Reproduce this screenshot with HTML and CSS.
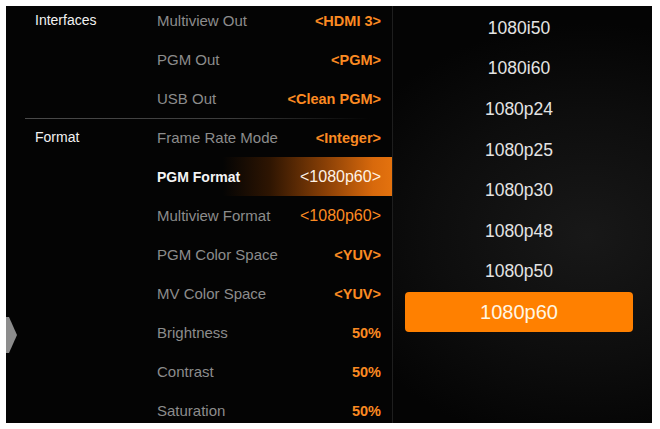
FILE: index.html
```html
<!DOCTYPE html>
<html>
<head>
<meta charset="utf-8">
<link rel="stylesheet" href="styles.css">
</head>
<body>
<div class="frame">
  <div class="screen">
    <div class="menu">
      <div class="group">
        <div class="cat">Interfaces</div>
        <div class="items">
          <div class="row"><span class="label">Multiview Out</span><span class="value">&lt;HDMI 3&gt;</span></div>
          <div class="row"><span class="label">PGM Out</span><span class="value">&lt;PGM&gt;</span></div>
          <div class="row"><span class="label">USB Out</span><span class="value">&lt;Clean PGM&gt;</span></div>
        </div>
      </div>
      <div class="sep"></div>
      <div class="group">
        <div class="cat">Format</div>
        <div class="items">
          <div class="row"><span class="label">Frame Rate Mode</span><span class="value">&lt;Integer&gt;</span></div>
          <div class="row active"><span class="label">PGM Format</span><span class="value">&lt;1080p60&gt;</span></div>
          <div class="row"><span class="label">Multiview Format</span><span class="value thin">&lt;1080p60&gt;</span></div>
          <div class="row"><span class="label">PGM Color Space</span><span class="value">&lt;YUV&gt;</span></div>
          <div class="row"><span class="label">MV Color Space</span><span class="value">&lt;YUV&gt;</span></div>
          <div class="row"><span class="label">Brightness</span><span class="value">50%</span></div>
          <div class="row"><span class="label">Contrast</span><span class="value">50%</span></div>
          <div class="row"><span class="label">Saturation</span><span class="value">50%</span></div>
        </div>
      </div>
    </div>
    <div class="options">
      <div class="opt">1080i50</div>
      <div class="opt">1080i60</div>
      <div class="opt">1080p24</div>
      <div class="opt">1080p25</div>
      <div class="opt">1080p30</div>
      <div class="opt">1080p48</div>
      <div class="opt">1080p50</div>
      <div class="opt selected">1080p60</div>
    </div>
    <svg class="back-arrow" width="12" height="36" viewBox="0 0 12 36"><polygon points="0,0 3,0 11,18 3,36 0,36" fill="#8c8c8c"/></svg>
  </div>
</div>
</body>
</html>
```
FILE: styles.css
```css
html, body {
  margin: 0;
  padding: 0;
  background: #ffffff;
}
body {
  font-family: "Liberation Sans", Arial, sans-serif;
}
.frame {
  padding: 6px 8px 6px 6px;
  width: 660px;
  height: 429px;
  box-sizing: border-box;
}
.screen {
  position: relative;
  display: flex;
  width: 646px;
  height: 417px;
  background: #040404;
  overflow: hidden;
}
.menu {
  width: 386px;
  margin-top: -5px;
  flex: none;
}
.group {
  display: flex;
}
.cat {
  width: 122px;
  padding-left: 29px;
  flex: none;
  height: 39px;
  line-height: 39px;
  color: #f2f2f2;
  font-size: 14px;
}
.items {
  flex: 1;
}
.row {
  height: 39px;
  display: flex;
  align-items: center;
  justify-content: space-between;
  padding-right: 11px;
}
.label {
  color: #8c8c8c;
  font-size: 15px;
}
.value {
  color: #fb8a22;
  font-size: 14.5px;
  font-weight: bold;
}
.value.thin {
  font-weight: normal;
  font-size: 16px;
}
.row.active {
  background: linear-gradient(90deg, rgba(0,0,0,0) 0%, rgba(0,0,0,0) 28%, #2e1502 48%, #8a4006 72%, #d8690c 92%, #e4720e 100%);
}
.row.active .label {
  color: #f4f4f4;
  font-weight: bold;
  font-size: 14px;
}
.row.active .value {
  color: #fff3e6;
  font-weight: normal;
  font-size: 16px;
}
.sep {
  height: 1px;
  margin: 0 22px -1px 19px;
  background: linear-gradient(90deg, #4a4a4a 0%, #3c3c3c 60%, rgba(60,60,60,0) 100%);
}
.options {
  flex: 1;
  border-left: 1px solid #1e1e1e;
  padding: 2px 19px 0 12px;
  background: radial-gradient(ellipse 120% 60% at 75% 55%, #181818 0%, #0d0d0d 50%, #040404 85%);
}
.opt {
  height: 40.6px;
  display: flex;
  align-items: center;
  justify-content: center;
  color: #e4e4e4;
  font-size: 17.5px;
}
.opt.selected {
  height: 40px;
  margin-top: 0.3px;
  background: #ff8000;
  border-radius: 4px;
  color: #fff6e4;
  font-size: 20px;
}
.back-arrow {
  position: absolute;
  left: 0;
  top: 311px;
}
```
